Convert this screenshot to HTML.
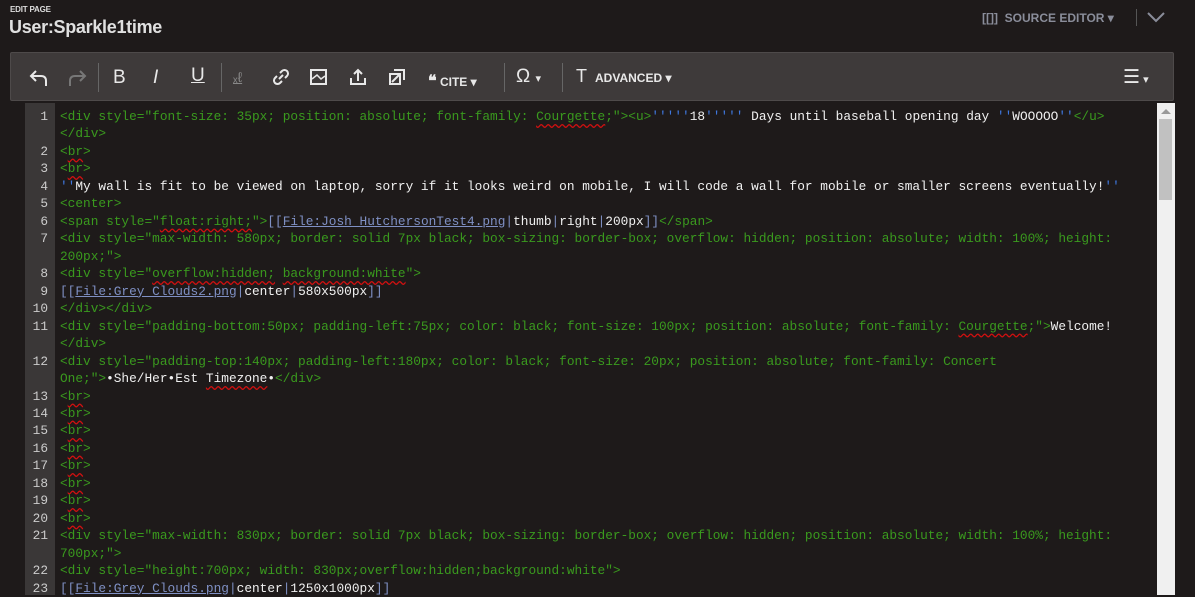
<!DOCTYPE html>
<html><head><meta charset="utf-8"><style>
*{margin:0;padding:0;box-sizing:border-box}
body{width:1195px;height:595px;background:#1e1a1a;overflow:hidden;font-family:"Liberation Sans",sans-serif;position:relative;color:#e8e8e8}
.ep{position:absolute;left:10px;top:5px;font-size:8px;font-weight:bold;color:#ddd;letter-spacing:-0.2px}
.title{position:absolute;left:9px;top:17px;font-size:18px;font-weight:bold;color:#e0e0e0;letter-spacing:-0.3px}
.se{position:absolute;left:982px;top:11px;font-size:12px;font-weight:bold;color:#8a8d9a}
.vsep{position:absolute;left:1136px;top:9px;width:1px;height:17px;background:#555}
.tb{position:absolute;left:10px;top:52px;width:1164px;height:49px;background:#3e3a3a;border:1px solid #4e4a4a;border-radius:2px}
.ic{position:absolute;top:14px}
.sep{position:absolute;top:10px;width:1px;height:29px;background:#666}
.tl{position:absolute;top:18px;font-size:12px;font-weight:bold;color:#e8e8e8}
.ed{position:absolute;left:25px;top:103px;width:1132px;height:492px;background:#1e1a1a}
.gut{position:absolute;left:25px;top:103px;width:30px;height:492px;background:#3a3737}
.sb{position:absolute;left:1157px;top:103px;width:18px;height:492px;background:#f0f0f0}
.thumb{position:absolute;left:1159px;top:119px;width:13px;height:81px;background:#c1c1c1}
.code{position:absolute;left:25px;top:108px;font-family:"Liberation Mono",monospace;font-size:12.8px;line-height:17.48px}
.r{height:17.48px;white-space:pre;position:relative}
.n{display:inline-block;width:23px;text-align:right;color:#ccc;margin-right:12px}
.g{color:#3a9a1e}.w{color:#f0f0f0}.b{color:#7f90c4}.q{color:#3f78e0}
.u{text-decoration:underline}
.s{text-decoration:underline wavy #d01010;text-underline-offset:3px}
</style></head><body>
<div class="ep">EDIT PAGE</div>
<div class="title">User:Sparkle1time</div>
<div class="se">[[]]&nbsp; SOURCE EDITOR ▾</div>
<div class="vsep"></div>
<svg style="position:absolute;left:1146px;top:10px" width="20" height="14"><path d="M2 3 L10 11 L18 3" stroke="#8a8d9a" stroke-width="2" fill="none"/></svg>
<div class="tb">
<svg class="ic" style="left:17px" width="22" height="22" viewBox="0 0 22 22"><path d="M8 4 L3 9 L8 14 M3 9 H13 Q18 9 18 14 V19" stroke="#e8e8e8" stroke-width="2" fill="none"/></svg>
<svg class="ic" style="left:55px" width="22" height="22" viewBox="0 0 22 22"><path d="M14 4 L19 9 L14 14 M19 9 H9 Q4 9 4 14 V19" stroke="#777" stroke-width="2" fill="none"/></svg>
<div class="sep" style="left:87px"></div>
<div class="tl" style="left:102px;top:14px;font-size:19px;font-weight:normal">B</div>
<div class="tl" style="left:142px;top:14px;font-size:19px;font-weight:normal;font-style:italic">I</div>
<div class="tl" style="left:180px;top:12px;font-size:19px;font-weight:normal;text-decoration:underline">U</div>
<div class="sep" style="left:210px"></div>
<div class="tl" style="left:222px;top:16px;font-size:14px;font-weight:normal;color:#888;text-decoration:underline">ₓℓ</div>
<svg class="ic" style="left:260px" width="20" height="20" viewBox="0 0 20 20"><path d="M8 12 L12 8 M6 9 L4 11 A3 3 0 0 0 9 16 L11 14 M14 11 L16 9 A3 3 0 0 0 11 4 L9 6" stroke="#e8e8e8" stroke-width="2" fill="none"/></svg>
<svg class="ic" style="left:298px" width="20" height="20" viewBox="0 0 20 20"><rect x="2" y="3" width="15" height="14" stroke="#e8e8e8" stroke-width="2" fill="none"/><path d="M3 12 L8 8 L12 12 L16 9" stroke="#e8e8e8" stroke-width="1.5" fill="none"/></svg>
<svg class="ic" style="left:337px" width="20" height="20" viewBox="0 0 20 20"><path d="M3 11 V17 H17 V11 M10 14 V3 M6 7 L10 3 L14 7" stroke="#e8e8e8" stroke-width="2" fill="none"/></svg>
<svg class="ic" style="left:376px" width="20" height="20" viewBox="0 0 20 20"><rect x="3" y="7" width="10" height="10" stroke="#e8e8e8" stroke-width="2" fill="none"/><path d="M7 3 H17 V13 M5 15 L12 8" stroke="#e8e8e8" stroke-width="2" fill="none"/></svg>
<div class="tl" style="left:417px"><span style="font-size:16px">❝</span> CITE ▾</div>
<div class="sep" style="left:493px"></div>
<div class="tl" style="left:505px;top:13px;font-size:19px;font-weight:normal">Ω <span style="font-size:11px">▾</span></div>
<div class="sep" style="left:551px"></div>
<div class="tl" style="left:565px;top:13px;font-size:18px;font-weight:normal">T</div>
<div class="tl" style="left:584px">ADVANCED ▾</div>
<div class="tl" style="left:1112px;top:13px;font-size:19px;font-weight:normal">☰<span style="font-size:11px"> ▾</span></div>
</div>
<div class="ed"></div><div class="gut"></div>
<div class="sb"></div><div class="thumb"></div>
<div style="position:absolute;left:1161px;top:109px;width:0;height:0;border-left:5px solid transparent;border-right:5px solid transparent;border-bottom:5px solid #999"></div>
<div class="code">
<div class="r"><span class="n">1</span><span class="g">&lt;div style="font-size: 35px; position: absolute; font-family: <span class="s">Courgette</span>;"&gt;&lt;u&gt;</span><span class="q">'''''</span><span class="w">18</span><span class="q">'''''</span><span class="w"> Days until baseball opening day </span><span class="q">''</span><span class="w">WOOOOO</span><span class="q">''</span><span class="g">&lt;/u&gt;</span></div>
<div class="r"><span class="n"></span><span class="g">&lt;/div&gt;</span></div>
<div class="r"><span class="n">2</span><span class="g">&lt;<span class="s">br</span>&gt;</span></div>
<div class="r"><span class="n">3</span><span class="g">&lt;<span class="s">br</span>&gt;</span></div>
<div class="r"><span class="n">4</span><span class="q">''</span><span class="w">My wall is fit to be viewed on laptop, sorry if it looks weird on mobile, I will code a wall for mobile or smaller screens eventually!</span><span class="q">''</span></div>
<div class="r"><span class="n">5</span><span class="g">&lt;center&gt;</span></div>
<div class="r"><span class="n">6</span><span class="g">&lt;span style="<span class="s">float:right;</span>"&gt;</span><span class="b">[[<span class="u">File:Josh_HutchersonTest4.png</span>|</span><span class="w">thumb</span><span class="b">|</span><span class="w">right</span><span class="b">|</span><span class="w">200px</span><span class="b">]]</span><span class="g">&lt;/span&gt;</span></div>
<div class="r"><span class="n">7</span><span class="g">&lt;div style="max-width: 580px; border: solid 7px black; box-sizing: border-box; overflow: hidden; position: absolute; width: 100%; height:</span></div>
<div class="r"><span class="n"></span><span class="g">200px;"&gt;</span></div>
<div class="r"><span class="n">8</span><span class="g">&lt;div style="<span class="s">overflow:hidden;</span> <span class="s">background:white</span>"&gt;</span></div>
<div class="r"><span class="n">9</span><span class="b">[[<span class="u">File:Grey_Clouds2.png</span>|</span><span class="w">center</span><span class="b">|</span><span class="w">580x500px</span><span class="b">]]</span></div>
<div class="r"><span class="n">10</span><span class="g">&lt;/div&gt;&lt;/div&gt;</span></div>
<div class="r"><span class="n">11</span><span class="g">&lt;div style="padding-bottom:50px; padding-left:75px; color: black; font-size: 100px; position: absolute; font-family: <span class="s">Courgette</span>;"&gt;</span><span class="w">Welcome!</span></div>
<div class="r"><span class="n"></span><span class="g">&lt;/div&gt;</span></div>
<div class="r"><span class="n">12</span><span class="g">&lt;div style="padding-top:140px; padding-left:180px; color: black; font-size: 20px; position: absolute; font-family: Concert</span></div>
<div class="r"><span class="n"></span><span class="g">One;"&gt;</span><span class="w">•She/Her•Est <span class="s">Timezone</span>•</span><span class="g">&lt;/div&gt;</span></div>
<div class="r"><span class="n">13</span><span class="g">&lt;<span class="s">br</span>&gt;</span></div>
<div class="r"><span class="n">14</span><span class="g">&lt;<span class="s">br</span>&gt;</span></div>
<div class="r"><span class="n">15</span><span class="g">&lt;<span class="s">br</span>&gt;</span></div>
<div class="r"><span class="n">16</span><span class="g">&lt;<span class="s">br</span>&gt;</span></div>
<div class="r"><span class="n">17</span><span class="g">&lt;<span class="s">br</span>&gt;</span></div>
<div class="r"><span class="n">18</span><span class="g">&lt;<span class="s">br</span>&gt;</span></div>
<div class="r"><span class="n">19</span><span class="g">&lt;<span class="s">br</span>&gt;</span></div>
<div class="r"><span class="n">20</span><span class="g">&lt;<span class="s">br</span>&gt;</span></div>
<div class="r"><span class="n">21</span><span class="g">&lt;div style="max-width: 830px; border: solid 7px black; box-sizing: border-box; overflow: hidden; position: absolute; width: 100%; height:</span></div>
<div class="r"><span class="n"></span><span class="g">700px;"&gt;</span></div>
<div class="r"><span class="n">22</span><span class="g">&lt;div style="height:700px; width: 830px;overflow:hidden;background:white"&gt;</span></div>
<div class="r"><span class="n">23</span><span class="b">[[<span class="u">File:Grey_Clouds.png</span>|</span><span class="w">center</span><span class="b">|</span><span class="w">1250x1000px</span><span class="b">]]</span></div>
</div>
</body></html>
